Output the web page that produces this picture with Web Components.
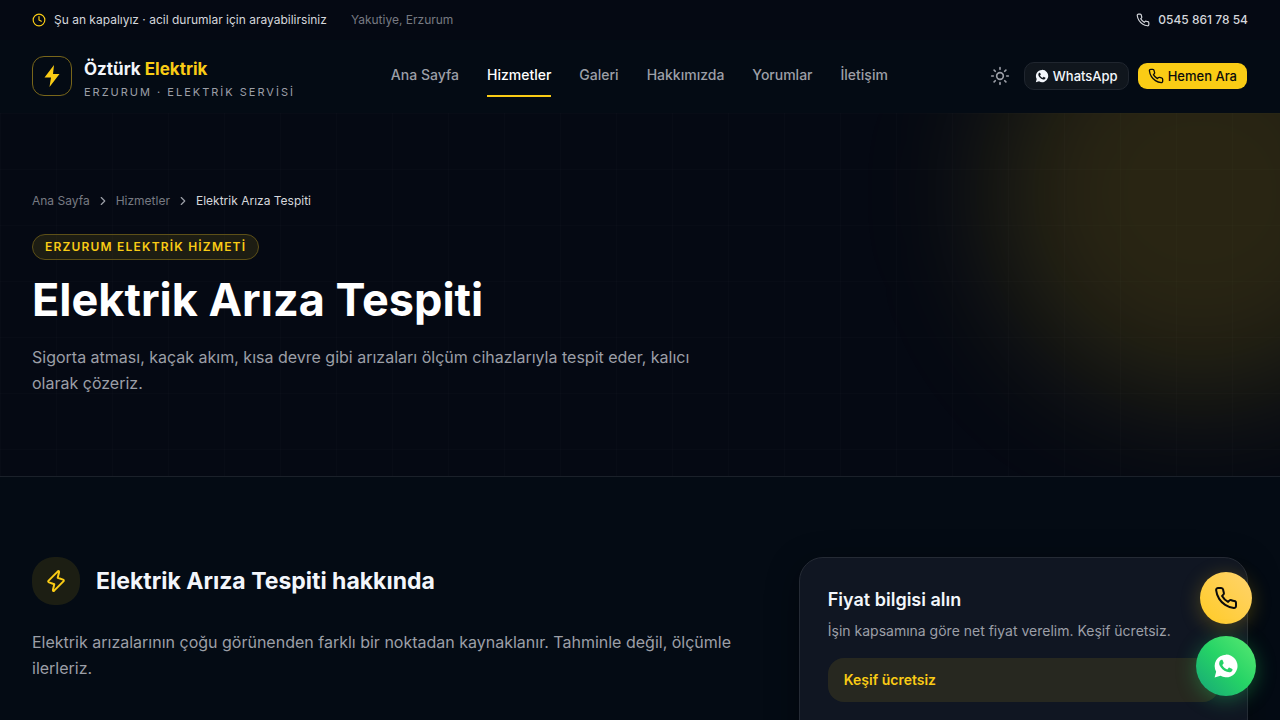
<!DOCTYPE html>
<html lang="tr">
<head>
<meta charset="utf-8">
<meta name="viewport" content="width=device-width, initial-scale=1">
<title>Elektrik Arıza Tespiti | Öztürk Elektrik</title>
<style>
  :root {
    --bg: #040b14;
    --bg-deep: #050913;
    --card: #101622;
    --line: #20262f;
    --text: #f3f6fb;
    --muted: #9c9fa7;
    --faint: #777a82;
    --accent: #facc15;
    --tint: rgba(250, 204, 21, .1);
  }
  body {
    margin: 0;
    background: var(--bg);
    color: var(--text);
    font-family: Inter, "Liberation Sans", sans-serif;
    font-size: 14px;
    line-height: 24px;
  }
</style>
</head>
<body>
<oz-topbar></oz-topbar>
<oz-header></oz-header>
<main>
  <oz-hero>
    <oz-breadcrumb slot="crumbs"></oz-breadcrumb>
    <span slot="badge">ERZURUM ELEKTRİK HİZMETİ</span>
    <span slot="title">Elektrik Arıza Tespiti</span>
    Sigorta atması, kaçak akım, kısa devre gibi arızaları ölçüm cihazlarıyla tespit eder, kalıcı olarak çözeriz.
  </oz-hero>
  <oz-columns>
    <oz-about>
      <span slot="title">Elektrik Arıza Tespiti hakkında</span>
      Elektrik arızalarının çoğu görünenden farklı bir noktadan kaynaklanır. Tahminle değil, ölçümle ilerleriz.
    </oz-about>
    <oz-price-card slot="aside">
      <span slot="title">Fiyat bilgisi alın</span>
      İşin kapsamına göre net fiyat verelim. Keşif ücretsiz.
      <span slot="note">Keşif ücretsiz</span>
    </oz-price-card>
  </oz-columns>
</main>
<oz-fabs></oz-fabs>

<script>
const stroke = (body, width = 2) =>
  `<svg viewBox="0 0 24 24" fill="none" stroke="currentColor" stroke-width="${width}" stroke-linecap="round" stroke-linejoin="round">${body}</svg>`;

const icons = {
  clock: stroke('<circle cx="12" cy="12" r="10"/><path d="M12 6v6l4 2"/>'),
  phone: stroke('<path d="M22 16.92v3a2 2 0 0 1-2.18 2 19.79 19.79 0 0 1-8.63-3.07 19.5 19.5 0 0 1-6-6 19.79 19.79 0 0 1-3.07-8.67A2 2 0 0 1 4.11 2h3a2 2 0 0 1 2 1.72 12.84 12.84 0 0 0 .7 2.81 2 2 0 0 1-.45 2.11L8.09 9.91a16 16 0 0 0 6 6l1.27-1.27a2 2 0 0 1 2.11-.45 12.84 12.84 0 0 0 2.81.7A2 2 0 0 1 22 16.92z"/>'),
  sun: stroke('<circle cx="12" cy="12" r="4"/><path d="M12 2v2M12 20v2M4.93 4.93l1.41 1.41M17.66 17.66l1.41 1.41M2 12h2M20 12h2M6.34 17.66l-1.41 1.41M19.07 4.93l-1.41 1.41"/>'),
  chevron: stroke('<path d="m9 18 6-6-6-6"/>'),
  zap: stroke('<path d="M13.6 2.6Q15.4 1 15 3.4L13.7 8.8 19 10.6Q20.4 11.2 19.4 12.4L10.4 21.4Q8.6 23 9 20.6L10.3 15.2 5 13.4Q3.6 12.8 4.6 11.6Z"/>'),
  bolt: '<svg viewBox="0 0 24 24" fill="currentColor"><path d="M14 1 4.5 13.5H11L9.5 23 19.5 10H13z"/></svg>',
  whatsapp: '<svg viewBox="0 0 24 24" fill="currentColor" fill-rule="evenodd"><path d="M12 1.5A10.5 10.5 0 0 0 2.9 17.2L1.5 22.5l5.4-1.4A10.5 10.5 0 1 0 12 1.5ZM8.1 6.3c.3 0 .6 0 .8.5l.9 2.2c.1.3.1.5-.1.8l-.9 1.1c-.2.2-.2.4 0 .7.9 1.6 2.2 2.7 3.9 3.5.3.1.5.1.7-.1l1.1-1.3c.2-.3.5-.3.8-.2l2.1 1c.4.2.6.3.6.5 0 1.2-.5 2-1.5 2.5-1.1.6-2.4.4-3.7-.1-3.3-1.2-5.3-3.5-6.5-5.6-.8-1.5-.9-3.3.4-4.8.4-.5.8-.7 1.4-.7Z"/></svg>',
};

class OzIcon extends HTMLElement {
  connectedCallback() {
    this.attachShadow({ mode: 'open' }).innerHTML = `
      <style>
        :host { display: inline-flex; flex: none; width: var(--size, 16px); height: var(--size, 16px); }
        svg { display: block; width: 100%; height: 100%; }
      </style>
      ${icons[this.getAttribute('name')]}`;
  }
}
customElements.define('oz-icon', OzIcon);

// registers an element whose shadow root is cloned from a template
function define(name, html) {
  const template = document.createElement('template');
  template.innerHTML = html;
  customElements.define(name, class extends HTMLElement {
    constructor() {
      super();
      this.attachShadow({ mode: 'open' }).appendChild(template.content.cloneNode(true));
    }
  });
}

define('oz-topbar', `
  <style>
    :host { display: flex; align-items: center; gap: 24px; height: 40px; padding: 0 32px; background: var(--bg-deep); color: #d5d7dc; font-size: 12px; }
    .status, a { display: flex; align-items: center; gap: 8px; }
    .status oz-icon { color: var(--accent); }
    oz-icon { --size: 14px; }
    .place { color: var(--faint); }
    a { margin-left: auto; color: inherit; font-weight: 500; text-decoration: none; }
  </style>
  <span class="status"><oz-icon name="clock"></oz-icon>Şu an kapalıyız · acil durumlar için arayabilirsiniz</span>
  <span class="place">Yakutiye, Erzurum</span>
  <a href="tel:05458617854"><oz-icon name="phone"></oz-icon>0545 861 78 54</a>
`);

define('oz-header', `
  <style>
    :host { display: flex; align-items: center; justify-content: space-between; height: 72px; padding: 0 32px; border-bottom: 1px solid transparent; }
    a { color: inherit; text-decoration: none; }
    .brand { display: flex; align-items: center; gap: 12px; }
    .mark { display: flex; align-items: center; justify-content: center; box-sizing: border-box; width: 40px; height: 40px; border: 1px solid #78661a; border-radius: 12px; color: var(--accent); }
    .mark oz-icon { --size: 24px; }
    .words { padding-top: 8px; }
    .name { display: block; font-size: 17px; font-weight: 700; line-height: 24px; }
    .name b { color: var(--accent); font-weight: 700; }
    .tag { display: block; color: var(--muted); font-size: 11px; letter-spacing: 2px; line-height: 22px; }
    nav { display: flex; gap: 28px; }
    nav a { padding: 8px 0; border-bottom: 2px solid transparent; color: var(--muted); font-weight: 500; }
    nav a[aria-current] { border-color: var(--accent); color: #fff; }
    .actions { display: flex; align-items: center; gap: 8px; }
    button { display: flex; align-items: center; justify-content: center; width: 32px; height: 32px; padding: 0; border: 0; background: none; color: var(--muted); }
    button oz-icon { --size: 20px; }
    .btn { display: flex; align-items: center; gap: 4px; padding: 0 10px; border: 1px solid var(--line); border-radius: 10px; background: #10161d; font-size: 13px; font-weight: 500; line-height: 26px; }
    .chat oz-icon { --size: 14px; }
    .call { border-color: transparent; background: var(--accent); background-clip: padding-box; color: #0b0b0b; }
  </style>
  <a class="brand" href="#">
    <span class="mark"><oz-icon name="bolt"></oz-icon></span>
    <span class="words"><span class="name">Öztürk <b>Elektrik</b></span><span class="tag">ERZURUM · ELEKTRİK SERVİSİ</span></span>
  </a>
  <nav>
    <a href="#">Ana Sayfa</a>
    <a href="#" aria-current="page">Hizmetler</a>
    <a href="#">Galeri</a>
    <a href="#">Hakkımızda</a>
    <a href="#">Yorumlar</a>
    <a href="#">İletişim</a>
  </nav>
  <div class="actions">
    <button type="button" aria-label="Tema"><oz-icon name="sun"></oz-icon></button>
    <a class="btn chat" href="#"><oz-icon name="whatsapp"></oz-icon>WhatsApp</a>
    <a class="btn call" href="tel:05458617854"><oz-icon name="phone"></oz-icon>Hemen Ara</a>
  </div>
`);

define('oz-breadcrumb', `
  <style>
    :host { display: block; }
    nav { display: flex; align-items: center; gap: 6px; color: var(--faint); font-size: 12px; line-height: 16px; }
    a { color: inherit; text-decoration: none; }
    oz-icon { --size: 14px; color: var(--muted); }
    [aria-current] { color: #d5d7dc; }
  </style>
  <nav aria-label="Konum">
    <a href="#">Ana Sayfa</a><oz-icon name="chevron"></oz-icon>
    <a href="#">Hizmetler</a><oz-icon name="chevron"></oz-icon>
    <span aria-current="page">Elektrik Arıza Tespiti</span>
  </nav>
`);

define('oz-hero', `
  <style>
    :host { display: block; position: relative; overflow: hidden; padding: 80px 32px; border-bottom: 1px solid #1b212a; background: var(--bg-deep); }
    .grid, .glow { position: absolute; pointer-events: none; }
    .grid {
      inset: 0;
      background-image: linear-gradient(90deg, rgba(255, 255, 255, .01) 1px, transparent 1px), linear-gradient(rgba(255, 255, 255, .01) 1px, transparent 1px);
      background-size: 56px 56px;
    }
    .glow { top: -128px; right: -128px; width: 416px; height: 416px; border-radius: 50%; background: rgba(250, 204, 21, .15); filter: blur(64px); }
    .content { position: relative; }
    .badge { display: inline-block; margin-top: 25px; padding: 4px 12px; border: 1px solid #5d5018; border-radius: 13px; background: var(--tint); color: var(--accent); font-size: 12px; font-weight: 600; letter-spacing: .1em; line-height: 16px; vertical-align: top; }
    h1 { margin: 12px 0 16px; color: #fff; font-size: 45px; font-weight: 700; line-height: 56px; }
    p { max-width: 672px; margin: 0; color: var(--muted); font-size: 16px; line-height: 26px; }
  </style>
  <div class="grid"></div>
  <div class="glow"></div>
  <div class="content">
    <slot name="crumbs"></slot>
    <div class="badge"><slot name="badge"></slot></div>
    <h1><slot name="title"></slot></h1>
    <p><slot></slot></p>
  </div>
`);

define('oz-columns', `
  <style>
    :host { display: grid; grid-template-columns: 8fr 5fr; gap: 48px; align-items: start; padding: 80px 32px; }
  </style>
  <slot></slot>
  <slot name="aside"></slot>
`);

define('oz-about', `
  <style>
    :host { display: block; }
    header { display: flex; align-items: center; gap: 16px; }
    .icon { display: flex; align-items: center; justify-content: center; width: 48px; height: 48px; border-radius: 22px; background: var(--tint); color: var(--accent); }
    .icon oz-icon { --size: 24px; }
    h2 { margin: 0; font-size: 23px; font-weight: 700; line-height: 32px; }
    p { margin: 24px 0 0; color: var(--muted); font-size: 16px; line-height: 26px; }
  </style>
  <header>
    <span class="icon"><oz-icon name="zap"></oz-icon></span>
    <h2><slot name="title"></slot></h2>
  </header>
  <p><slot></slot></p>
`);

define('oz-price-card', `
  <style>
    :host { display: block; padding: 28px 28px 56px; border: 1px solid #252b35; border-radius: 24px; background: var(--card); box-shadow: 0 8px 32px rgba(0, 0, 0, .4); }
    h3 { margin: 0 0 4px; font-size: 18px; font-weight: 600; line-height: 28px; }
    p { margin: 0 0 14px; color: var(--muted); line-height: 26px; }
    .note { padding: 10px 16px; border-radius: 16px; background: var(--tint); color: var(--accent); font-weight: 600; line-height: 24px; }
  </style>
  <h3><slot name="title"></slot></h3>
  <p><slot></slot></p>
  <div class="note"><slot name="note"></slot></div>
`);

define('oz-fabs', `
  <style>
    :host { display: flex; flex-direction: column; align-items: center; gap: 12px; position: fixed; right: 24px; bottom: 24px; }
    a { display: flex; align-items: center; justify-content: center; border-radius: 50%; }
    oz-icon { --size: 24px; }
    .call { width: 52px; height: 52px; background: linear-gradient(45deg, #ffcb24, #ffd36e); color: #0b0b0b; box-shadow: 0 4px 20px rgba(250, 204, 21, .25); }
    .wa { width: 60px; height: 60px; background: linear-gradient(45deg, #16a578, #25d366 50%, #5bea72); color: #fff; box-shadow: 0 4px 20px rgba(37, 211, 102, .35); }
    .wa oz-icon { --size: 26px; }
  </style>
  <a class="call" href="tel:05458617854" aria-label="Hemen Ara"><oz-icon name="phone"></oz-icon></a>
  <a class="wa" href="#" aria-label="WhatsApp"><oz-icon name="whatsapp"></oz-icon></a>
`);
</script>
</body>
</html>
